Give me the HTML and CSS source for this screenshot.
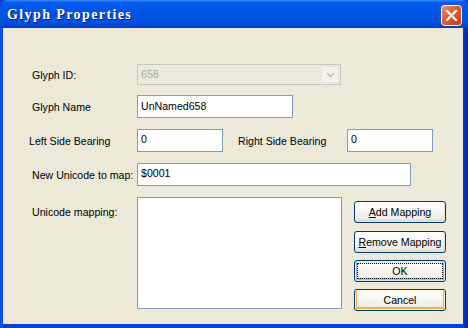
FILE: index.html
```html
<!DOCTYPE html>
<html lang="en">
<head>
    <meta charset="UTF-8">
    <title>Glyph Properties</title>
    <link rel="stylesheet" href="styles.css">
</head>
<body>
    <div class="window">
        <div class="titlebar">
            <span class="title">Glyph Properties</span>
            <button class="close" title="Close">
                <svg width="21" height="21" viewBox="0 0 21 21">
                    <defs>
                        <linearGradient id="red" x1="0" y1="0" x2="1" y2="1">
                            <stop offset="0" stop-color="#f09a7a"/>
                            <stop offset="0.35" stop-color="#e2643c"/>
                            <stop offset="1" stop-color="#c13b14"/>
                        </linearGradient>
                    </defs>
                    <rect x="0.5" y="0.5" width="20" height="20" rx="3" fill="url(#red)" stroke="#fff"/>
                    <path d="M6 6 L15 15 M15 6 L6 15" stroke="#fff" stroke-width="2.2" stroke-linecap="square"/>
                </svg>
            </button>
        </div>
        <div class="frame">
            <div class="client">
                <div class="row row-first">
                    <label class="label">Glyph ID:</label>
                    <div class="combo disabled">
                        <span class="combo-text">658</span>
                        <span class="combo-btn">
                            <svg width="9" height="6" viewBox="0 0 9 6"><path d="M1 1 L4.5 4.5 L8 1" fill="none" stroke="#c5c3b6" stroke-width="1.6"/></svg>
                        </span>
                    </div>
                </div>
                <div class="row">
                    <label class="label">Glyph Name</label>
                    <div class="field name-field">UnNamed658</div>
                </div>
                <div class="row">
                    <label class="label label-flush">Left Side Bearing</label>
                    <div class="field short-field">0</div>
                    <label class="label label-right">Right Side Bearing</label>
                    <div class="field short-field">0</div>
                </div>
                <div class="row">
                    <label class="label">New Unicode to map:</label>
                    <div class="field unicode-field">$0001</div>
                </div>
                <div class="row row-list">
                    <label class="label label-top">Unicode mapping:</label>
                    <div class="listbox"></div>
                    <div class="buttons">
                        <button class="btn btn-add"><u>A</u>dd Mapping</button>
                        <button class="btn"><u>R</u>emove Mapping</button>
                        <button class="btn btn-focus"><span class="focus-ring">OK</span></button>
                        <button class="btn btn-hot">Cancel</button>
                    </div>
                </div>
            </div>
        </div>
    </div>
</body>
</html>
```

FILE: styles.css
```css
body {
    margin: 0;
    font-family: "Liberation Sans", Arial, sans-serif;
    font-size: 10.6px;
    background-color: #0a3fd6;
}

.window {
    width: 468px;
    height: 328px;
    display: flex;
    flex-direction: column;
    overflow: hidden;
}

.titlebar {
    height: 28px;
    flex: none;
    display: flex;
    align-items: center;
    justify-content: space-between;
    padding: 0 6px 0 7px;
    border-radius: 7px 7px 0 0;
    background: linear-gradient(to bottom, #3a8cf8 0, #0a5ef0 2px, #0058ee 5px, #0054e3 14px, #0050dc 22px, #0046cf 26px, #003fc0 28px);
}

.title {
    font-family: "Liberation Serif", "Times New Roman", serif;
    font-weight: bold;
    font-size: 14px;
    letter-spacing: 1.4px;
    color: #fff;
    text-shadow: 1px 1px 0 #0a1e8a;
    margin-top: 1px;
}

.close {
    width: 21px;
    height: 21px;
    padding: 0;
    border: none;
    background: none;
    display: block;
    margin-top: 2px;
}

.close svg {
    display: block;
}

.frame {
    flex: 1;
    display: flex;
    padding: 0 5px 4px 3px;
    background: linear-gradient(to right, #0841d8 0, #1a5cf0 1px, #0841d8 3px, #0841d8 463px, #0a2fb0 465px, #0d2a9a 468px);
}

.client {
    flex: 1;
    background-color: #ece9d8;
    padding: 36px 0 0 26px;
}

.row {
    display: flex;
    align-items: center;
    margin-bottom: 11px;
}

.row-first {
    margin-bottom: 10px;
}

.label {
    width: 105px;
    padding-left: 3px;
    flex: none;
    white-space: nowrap;
    color: #000;
}

.label-flush {
    width: 108px;
    padding-left: 0;
}

.label-right {
    width: 109px;
    padding-left: 0;
    margin-left: 15px;
}

.label-top {
    padding-top: 9px;
}

.field {
    box-sizing: border-box;
    height: 23px;
    border: 1px solid #7f9db9;
    background-color: #fff;
    padding: 2px 3px;
    line-height: 14px;
    color: #000;
}

.name-field {
    width: 156px;
    line-height: 16px;
}

.short-field {
    width: 86px;
}

.unicode-field {
    width: 274px;
}

.combo {
    box-sizing: border-box;
    width: 204px;
    height: 21px;
    display: flex;
    align-items: stretch;
    border: 1px solid #c9c7ba;
    background-color: #ebeadb;
}

.combo-text {
    flex: 1;
    padding: 3px 3px;
    color: #aca899;
}

.combo-btn {
    width: 16px;
    margin: 1px;
    display: flex;
    align-items: center;
    justify-content: center;
    background-color: #f3f2ea;
    border: 1px solid #e6e4d9;
}

.row-list {
    align-items: flex-start;
}

.listbox {
    box-sizing: border-box;
    width: 205px;
    height: 112px;
    border: 1px solid #7f9db9;
    background-color: #fff;
}

.buttons {
    display: flex;
    flex-direction: column;
    gap: 7px;
    margin: 4px 0 0 12px;
}

.btn {
    box-sizing: border-box;
    width: 92px;
    height: 22px;
    padding: 0;
    font-family: "Liberation Sans", Arial, sans-serif;
    font-size: 10.6px;
    font-weight: normal;
    color: #000;
    border: 1px solid #003c74;
    border-radius: 3px;
    background: linear-gradient(to bottom, #ffffff 0, #f7f7f3 40%, #efeee7 80%, #d8d3c6 100%);
    box-shadow: inset -1px -1px 0 #e3dfd3;
}

.btn-add {
    margin-bottom: 1px;
}

.btn-focus {
    box-shadow: inset 0 0 0 1px #cee7ff, inset 0 -1px 0 2px #98b8ea;
    padding: 2px;
}

.focus-ring {
    display: flex;
    align-items: center;
    justify-content: center;
    height: 100%;
    outline: 1px dotted #000;
    outline-offset: -1px;
}

.btn-hot {
    box-shadow: inset 0 0 0 1px #fff0cf, inset 0 -1px 0 2px #f8b330;
}
```
